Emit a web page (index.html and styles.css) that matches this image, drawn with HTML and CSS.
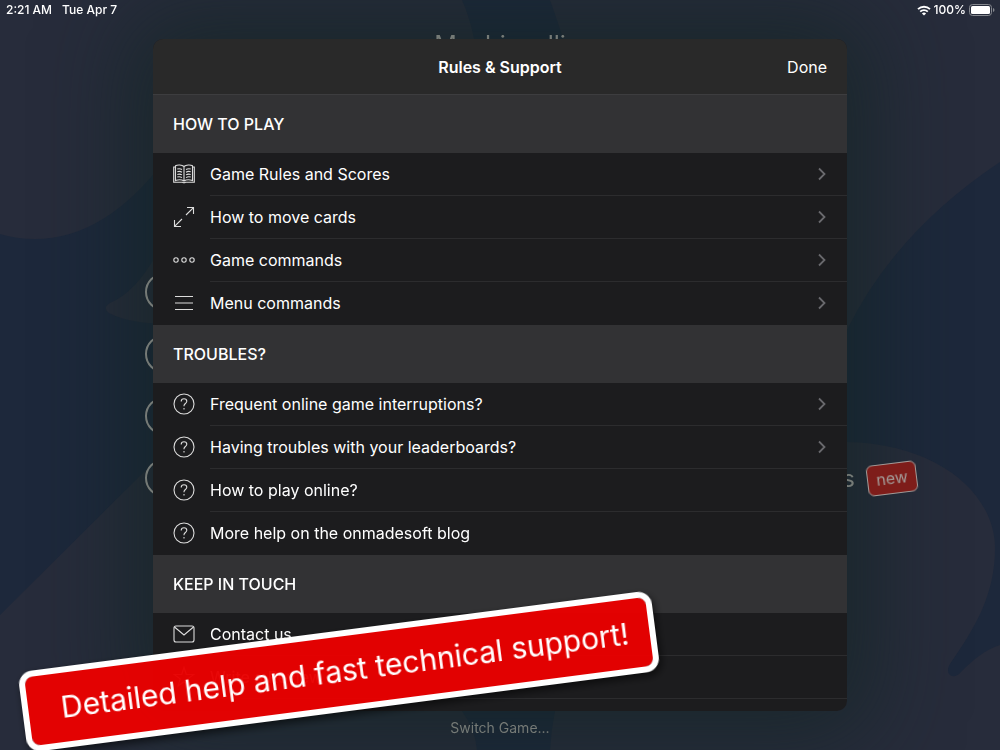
FILE: index.html
```
<!DOCTYPE html>
<html lang="en">
<head>
    <meta charset="UTF-8">
    <meta name="viewport" content="width=device-width, initial-scale=1.0">
    <title>Rules &amp; Support</title>
    <link rel="stylesheet" href="styles.css">
</head>
<body>
    <!-- Wallpaper -->
    <svg class="wallpaper" viewBox="0 0 1000 750" preserveAspectRatio="none" aria-hidden="true">
        <path d="M0 0H462Q470 18 474 39L400 160H165Q105 239 35 239Q16 239 0 234Z"/>
        <path d="M550 0H1000V162Q895 232 847 330L640 300L563 39Q558 22 550 0Z"/>
        <path d="M170 225Q145 288 110 303Q102 308 109 313Q130 324 170 324Z"/>
        <path d="M0 615L153 463L300 400L462 711Q475 729 477 750H0Z"/>
        <path d="M800 442H847C940 444 995 495 995 548C995 595 975 628 950 664C944 674 953 681 961 672C974 659 985 650 1000 645V750H550Q551 730 555 711Z"/>
    </svg>

    <div class="status-bar">
        <div class="status-left">
            <span>2:21 AM</span>
            <span>Tue Apr 7</span>
        </div>
        <div class="status-right">
            <svg width="14" height="11" viewBox="0 0 14 11" fill="none" stroke="#fff" stroke-width="1.8">
                <path d="M1 4.2a8.6 8.6 0 0 1 12 0M3.2 6.6a5.4 5.4 0 0 1 7.6 0"/>
                <path d="M7 10.6L4.9 8.5a3 3 0 0 1 4.2 0z" fill="#fff" stroke="none"/>
            </svg>
            <span>100%</span>
            <svg width="26" height="12" viewBox="0 0 26 12">
                <rect x="0.5" y="0.5" width="22" height="11" rx="3" fill="none" stroke="#85888e"/>
                <rect x="2" y="2" width="19" height="8" rx="1.5" fill="#fff"/>
                <path d="M24 4v4q1.500-.5 1.500-2T24 4z" fill="#85888e"/>
            </svg>
        </div>
    </div>

    <!-- Game menu behind the sheet -->
    <main class="game-menu">
        <h1>Machiavelli</h1>
        <div class="modes">
            <div class="mode"><span class="ring"></span></div>
            <div class="mode"><span class="ring"></span></div>
            <div class="mode"><span class="ring"></span></div>
            <div class="mode"><span class="ring"></span><span class="mode-name">s</span><span class="new-badge">new</span></div>
        </div>
        <a href="#" class="switch-game">Switch Game...</a>
    </main>

    <!-- Icons used more than once -->
    <svg width="0" height="0" class="symbols" aria-hidden="true">
        <symbol id="help" viewBox="0 0 22 22">
            <circle cx="11" cy="11" r="10"/>
            <path d="M8.200 8.400c0-1.700 1.200-2.700 2.800-2.700s2.800 1.100 2.800 2.500c0 2.200-2.800 2.300-2.800 4.500v.6M11 15v1.400"/>
        </symbol>
        <symbol id="chevron" viewBox="0 0 8 14">
            <path d="M1 1.500L6.500 7L1 12.500"/>
        </symbol>
    </svg>

    <div class="overlay">
        <div class="sheet" role="dialog" aria-labelledby="sheet-title">
            <header>
                <h2 id="sheet-title">Rules &amp; Support</h2>
                <button type="button" class="done">Done</button>
            </header>

            <h3>HOW TO PLAY</h3>
            <ul>
                <li><a href="#">
                    <svg class="icon" viewBox="0 0 22 22">
                        <path d="M11 3.500C9 1.700 4.500 1.500 2.500 2.800V17.600C5 16.600 9 16.700 11 18C13 16.700 17 16.600 19.500 17.600V2.800C17.500 1.500 13 1.700 11 3.500zM11 3.500V18M2.500 4H.7V19.300H9.500Q11 20.300 12.500 19.300H21.300V4H19.500"/>
                        <path d="M4.300 6q2.500-.8 4.700.5M4.300 8.700q2.500-.8 4.700.5M4.300 11.400q2.500-.8 4.700.5M4.300 14.100q2.500-.8 4.700.5M13 6.500q2.200-1.300 4.700-.5M13 9.200q2.200-1.300 4.700-.5M13 11.900q2.200-1.300 4.700-.5M13 14.600q2.200-1.300 4.700-.5"/>
                    </svg>
                    <span class="label">Game Rules and Scores</span>
                    <svg class="chevron"><use href="#chevron"/></svg>
                </a></li>
                <li><a href="#">
                    <svg class="icon" viewBox="0 0 22 22">
                        <path d="M13 9L20.200 1.800M14 1.500H20.500V8M9 13L1.800 20.200M1.500 14V20.500H8"/>
                    </svg>
                    <span class="label">How to move cards</span>
                    <svg class="chevron"><use href="#chevron"/></svg>
                </a></li>
                <li><a href="#">
                    <svg class="icon" viewBox="0 0 22 22">
                        <circle cx="3" cy="11" r="2.200"/><circle cx="11" cy="11" r="2.200"/><circle cx="19" cy="11" r="2.200"/>
                    </svg>
                    <span class="label">Game commands</span>
                    <svg class="chevron"><use href="#chevron"/></svg>
                </a></li>
                <li><a href="#">
                    <svg class="icon" viewBox="0 0 22 22">
                        <path d="M2 4.500H20M2 11H20M2 17.500H20"/>
                    </svg>
                    <span class="label">Menu commands</span>
                    <svg class="chevron"><use href="#chevron"/></svg>
                </a></li>
            </ul>

            <h3>TROUBLES?</h3>
            <ul>
                <li><a href="#">
                    <svg class="icon"><use href="#help"/></svg>
                    <span class="label">Frequent online game interruptions?</span>
                    <svg class="chevron"><use href="#chevron"/></svg>
                </a></li>
                <li><a href="#">
                    <svg class="icon"><use href="#help"/></svg>
                    <span class="label">Having troubles with your leaderboards?</span>
                    <svg class="chevron"><use href="#chevron"/></svg>
                </a></li>
                <li><a href="#">
                    <svg class="icon"><use href="#help"/></svg>
                    <span class="label">How to play online?</span>
                </a></li>
                <li><a href="#">
                    <svg class="icon"><use href="#help"/></svg>
                    <span class="label">More help on the onmadesoft blog</span>
                </a></li>
            </ul>

            <h3>KEEP IN TOUCH</h3>
            <ul class="more">
                <li><a href="#">
                    <svg class="icon" viewBox="0 0 22 22">
                        <rect x="1" y="3" width="20" height="16" rx="2"/>
                        <path d="M1.500 4L11 12L20.500 4"/>
                    </svg>
                    <span class="label">Contact us</span>
                </a></li>
                <li><a href="#">
                    <svg class="icon" viewBox="0 0 22 22">
                        <path d="M11 1.500L13.300 8.500H20.800L14.800 12.900L17 20L11 15.700L5 20L7.200 12.900L1.200 8.500H8.700Z"/>
                    </svg>
                    <span class="label">Write a Review</span>
                </a></li>
            </ul>
        </div>
    </div>

    <div class="banner">Detailed help and fast technical support!</div>
</body>
</html>
```

FILE: styles.css
```
* {
    box-sizing: border-box;
}

body {
    margin: 0;
    height: 100vh;
    overflow: hidden;
    font-family: Inter, "Liberation Sans", sans-serif;
    background-color: #1d283b;
    color: #fff;
}

a {
    color: inherit;
    text-decoration: none;
}

.wallpaper {
    position: fixed;
    top: 0;
    left: 0;
    width: 100%;
    height: 100%;
    z-index: -2;
    fill: #272c3b;
}

.symbols {
    position: absolute;
}

/* Status bar */
.status-bar {
    position: relative;
    z-index: 2;
    display: flex;
    justify-content: space-between;
    height: 20px;
    padding: 0 5px 0 6px;
    font-size: 12px;
    line-height: 20px;
    font-weight: 500;
}

.status-left {
    display: flex;
    gap: 10px;
}

.status-right {
    display: flex;
    align-items: center;
    gap: 3px;
}

/* Game menu */
.game-menu {
    display: flex;
    flex-direction: column;
    align-items: center;
    height: calc(100vh - 20px);
    padding: 10px 83px 12px 145px;
    color: #757a76;
}

/* Soft glow around the sheet, under the menu texts */
.game-menu::before {
    content: "";
    position: fixed;
    top: 39px;
    bottom: 39px;
    left: 0;
    right: 0;
    z-index: -1;
    width: calc(100% - 40px);
    max-width: 694px;
    margin: 0 auto;
    border-radius: 10px;
    box-shadow: 0 0 90px 20px rgba(19, 37, 36, 0.7);
}

.game-menu h1 {
    margin: 0 0 0 -62px;
    font-size: 25px;
    line-height: 30px;
    font-weight: 400;
}

.modes {
    display: flex;
    flex-direction: column;
    gap: 24px;
    width: 100%;
    margin-top: 213px;
}

.mode {
    display: flex;
    align-items: center;
    height: 38px;
}

.ring {
    width: 38px;
    height: 38px;
    border: 2px solid #757a76;
    border-radius: 50%;
}

.mode-name {
    margin-left: auto;
    font-size: 24px;
}

.new-badge {
    margin-left: 12px;
    width: 50px;
    border: 1px solid #a39b98;
    border-radius: 6px;
    background-color: #7e1d1a;
    color: #a39b98;
    font-size: 16px;
    line-height: 29px;
    text-align: center;
    transform: rotate(-7deg);
}

.switch-game {
    margin: auto 0 0 -62px;
    font-size: 14px;
    line-height: 20px;
}

/* Sheet */
.overlay {
    position: fixed;
    top: 0;
    left: 0;
    width: 100%;
    height: 100%;
    padding: 39px 20px;
    display: flex;
    justify-content: center;
}

.sheet {
    width: 100%;
    max-width: 694px;
    overflow: hidden;
    border-radius: 10px;
    background-color: #1c1c1e;
}

.sheet header {
    display: grid;
    grid-template-columns: 1fr auto 1fr;
    align-items: center;
    height: 56px;
    padding: 0 20px;
    border-bottom: 1px solid #3d3d3f;
    background-color: #292929;
}

.sheet h2 {
    grid-column: 2;
    margin: 0;
    font-size: 16px;
    font-weight: 600;
}

.done {
    justify-self: end;
    padding: 0;
    border: none;
    background: none;
    color: #fff;
    font: inherit;
    font-size: 16px;
    cursor: pointer;
}

.sheet h3 {
    margin: 0;
    padding: 0 20px;
    background-color: #323234;
    font-size: 16px;
    line-height: 58px;
    font-weight: 500;
}

.sheet ul {
    margin: 0;
    padding: 0;
    list-style: none;
}

.sheet li a {
    display: flex;
    align-items: center;
    height: 43px;
    padding-left: 20px;
}

.icon {
    width: 22px;
    height: 22px;
    margin: 0 15px 1px 0;
    fill: none;
    stroke: #dcdcdc;
    stroke-width: 1.1;
}

.label {
    flex: 1;
    height: 43px;
    border-bottom: 1px solid #2c2c2e;
    font-size: 16px;
    line-height: 43px;
}

.chevron {
    width: 29px;
    height: 43px;
    padding: 14px 21px 14px 0;
    border-bottom: 1px solid #2c2c2e;
    fill: none;
    stroke: #69696d;
    stroke-width: 1.8;
}

.sheet li:last-child .label,
.sheet li:last-child .chevron {
    border-bottom-color: transparent;
}

.sheet .more li:last-child .label {
    border-bottom-color: #2c2c2e;
}

/* Red banner */
.banner {
    position: fixed;
    left: 20px;
    bottom: 38px;
    width: 638px;
    padding-left: 12px;
    border: 6px solid #fff;
    border-radius: 14px;
    background-color: rgba(232, 0, 0, 0.97);
    background-clip: padding-box;
    box-shadow: 2px 4px 8px rgba(0, 0, 0, 0.6);
    font-size: 30px;
    line-height: 69px;
    text-align: center;
    transform: rotate(-7.4deg);
}
```
